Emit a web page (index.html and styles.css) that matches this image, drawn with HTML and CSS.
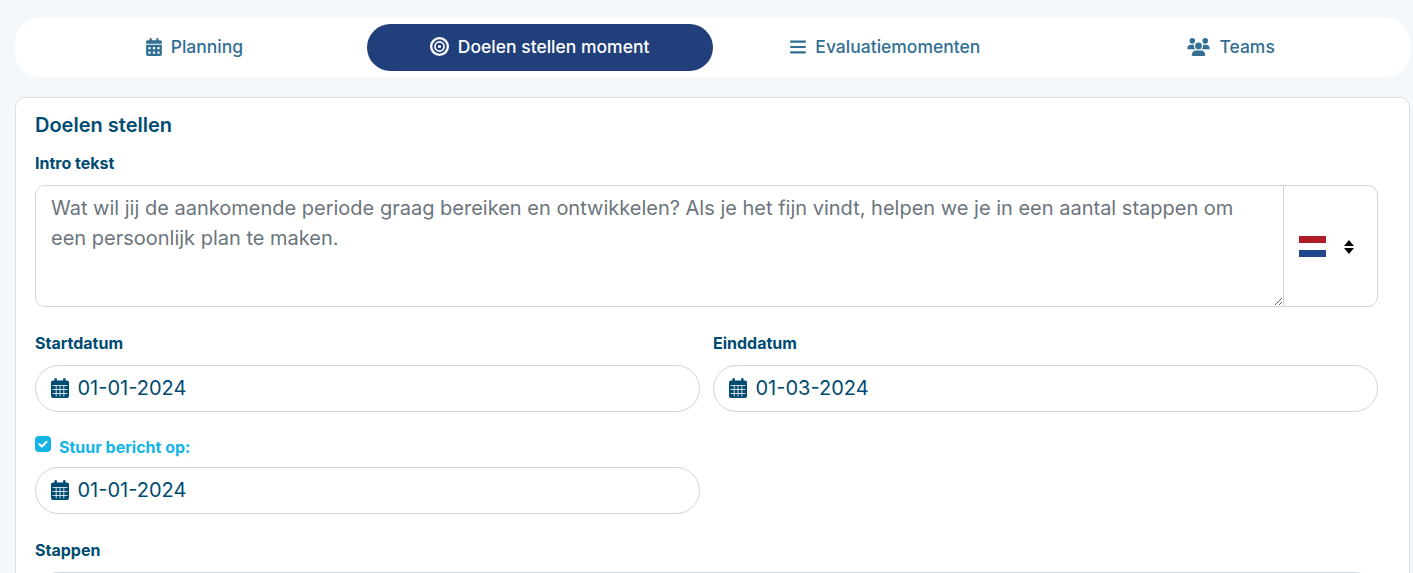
FILE: index.html
```html
<!DOCTYPE html>
<html lang="en">
  <head>
    <meta charset="UTF-8">
    <title>Doelen stellen</title>
    <link rel="stylesheet" href="styles.css">
  </head>
  <body>

    <svg class="icon-defs" width="0" height="0">
      <symbol id="calendar" viewBox="0 0 448 512">
        <path d="M128 0c17.7 0 32 14.3 32 32V64H288V32c0-17.7 14.3-32 32-32s32 14.3 32 32V64h48c26.500 0 48 21.500 48 48v48H0V112C0 85.500 21.500 64 48 64H96V32c0-17.700 14.300-32 32-32zM0 192H448V464c0 26.500-21.500 48-48 48H48c-26.500 0-48-21.500-48-48V192zm64 80v32c0 8.800 7.200 16 16 16h32c8.800 0 16-7.200 16-16V272c0-8.800-7.200-16-16-16H80c-8.800 0-16 7.200-16 16zm128 0v32c0 8.800 7.200 16 16 16h32c8.800 0 16-7.200 16-16V272c0-8.800-7.200-16-16-16H208c-8.800 0-16 7.200-16 16zm144-16c-8.800 0-16 7.200-16 16v32c0 8.800 7.200 16 16 16h32c8.800 0 16-7.200 16-16V272c0-8.800-7.200-16-16-16H336zM64 400v32c0 8.800 7.200 16 16 16h32c8.800 0 16-7.200 16-16V400c0-8.800-7.200-16-16-16H80c-8.800 0-16 7.200-16 16zm144-16c-8.800 0-16 7.200-16 16v32c0 8.800 7.200 16 16 16h32c8.800 0 16-7.200 16-16V400c0-8.800-7.200-16-16-16H208zm112 16v32c0 8.800 7.200 16 16 16h32c8.800 0 16-7.200 16-16V400c0-8.800-7.200-16-16-16H336c-8.800 0-16 7.200-16 16z"/>
      </symbol>
      <symbol id="calendar-grid" viewBox="0 0 18 20">
        <rect x="3.500" y="0" width="2.400" height="4" rx="1.200"/>
        <rect x="12.100" y="0" width="2.400" height="4" rx="1.200"/>
        <path d="M2 2.500h14a2 2 0 0 1 2 2V18a2 2 0 0 1-2 2H2a2 2 0 0 1-2-2V4.500a2 2 0 0 1 2-2z"/>
        <path d="M1.500 7.500h15M1.500 11.500h15M1.500 15.500h15M5.200 7.500v11M9 7.500v11M12.800 7.500v11" stroke="#fff" stroke-width="0.800" fill="none"/>
      </symbol>
    </svg>

    <nav class="tabs">
      <a class="tab">
        <svg class="tab-icon cal"><use href="#calendar"/></svg>
        Planning
      </a>
      <a class="tab active">
        <svg class="tab-icon target" viewBox="0 0 18 18">
          <circle cx="9" cy="9" r="7.900" fill="none" stroke="currentColor" stroke-width="2.200"/>
          <circle cx="9" cy="9" r="4.300" fill="none" stroke="currentColor" stroke-width="1.600"/>
          <circle cx="9" cy="9" r="1.500" fill="currentColor"/>
        </svg>
        Doelen stellen moment
      </a>
      <a class="tab">
        <svg class="tab-icon bars" viewBox="0 0 16 14" fill="currentColor">
          <rect x="0" y="0.500" width="16" height="2.200" rx="1"/>
          <rect x="0" y="5.900" width="16" height="2.200" rx="1"/>
          <rect x="0" y="11.300" width="16" height="2.200" rx="1"/>
        </svg>
        Evaluatiemomenten
      </a>
      <a class="tab">
        <svg class="tab-icon users" viewBox="0 0 640 512" fill="currentColor">
          <path d="M144 0a80 80 0 1 1 0 160A80 80 0 1 1 144 0zM512 0a80 80 0 1 1 0 160A80 80 0 1 1 512 0zM0 298.700C0 239.800 47.800 192 106.700 192h42.700c15.900 0 31 3.500 44.600 9.700-1.300 7.200-1.900 14.700-1.900 22.300 0 38.200 16.800 72.500 43.300 96H21.300C9.600 320 0 310.400 0 298.700zM405.300 320h-.7c26.600-23.500 43.300-57.800 43.300-96 0-7.600-.7-15-1.900-22.300 13.600-6.300 28.700-9.700 44.600-9.700h42.700C592.200 192 640 239.800 640 298.700c0 11.800-9.600 21.300-21.300 21.300H405.300zM224 224a96 96 0 1 1 192 0 96 96 0 1 1-192 0zM128 485.300C128 411.700 187.700 352 261.300 352h117.300C452.300 352 512 411.700 512 485.300c0 14.700-11.900 26.700-26.700 26.700H154.700c-14.700 0-26.700-11.900-26.700-26.700z"/>
        </svg>
        Teams
      </a>
    </nav>

    <section class="card">
      <h2>Doelen stellen</h2>

      <label class="field-label">Intro tekst</label>
      <div class="intro-box">
        <textarea class="intro-text">Wat wil jij de aankomende periode graag bereiken en ontwikkelen? Als je het fijn vindt, helpen we je in een aantal stappen om een persoonlijk plan te maken.</textarea>
        <div class="lang-select">
          <svg class="flag" viewBox="0 0 27 21">
            <rect width="27" height="7" fill="#ae1c28"/>
            <rect y="7" width="27" height="7" fill="#fff"/>
            <rect y="14" width="27" height="7" fill="#21468b"/>
          </svg>
          <svg class="updown" viewBox="0 0 10 14">
            <path d="M5 0l5 6H0zM5 14L0 8h10z"/>
          </svg>
        </div>
      </div>

      <div class="date-row">
        <div>
          <label class="field-label">Startdatum</label>
          <div class="date-input">
            <svg class="date-icon"><use href="#calendar-grid"/></svg>
            01-01-2024
          </div>
        </div>
        <div>
          <label class="field-label">Einddatum</label>
          <div class="date-input">
            <svg class="date-icon"><use href="#calendar-grid"/></svg>
            01-03-2024
          </div>
        </div>
      </div>

      <div class="date-row send-row">
        <div>
          <div class="check-line">
            <span class="checkbox">
              <svg viewBox="0 0 16 16"><path d="M4.500 8.200l2.400 2.300 4.600-4.800" fill="none" stroke="#fff" stroke-width="2" stroke-linecap="round" stroke-linejoin="round"/></svg>
            </span>
            <label class="field-label send-label">Stuur bericht op:</label>
          </div>
          <div class="date-input">
            <svg class="date-icon"><use href="#calendar-grid"/></svg>
            01-01-2024
          </div>
        </div>
      </div>

      <label class="field-label steps-label">Stappen</label>
      <div class="steps-box"></div>
    </section>

  </body>
</html>
```

FILE: styles.css
```css
* {
  box-sizing: border-box;
  margin: 0;
  padding: 0;
}

html, body {
  height: 573px;
  overflow: hidden;
}

body {
  background-color: #f5f8fb;
  font-family: Inter, "Noto Sans", sans-serif;
  color: #004b71;
  padding: 18px 3px 0 15px;
}

.icon-defs {
  display: block;
  height: 0;
}

.tabs {
  display: grid;
  grid-template-columns: repeat(4, 1fr);
  height: 59px;
  padding: 6px;
  background-color: white;
  border-radius: 24px;
}

.tab {
  display: flex;
  align-items: center;
  justify-content: center;
  gap: 9px;
  padding-bottom: 2px;
  font-size: 17.5px;
  font-weight: 500;
  color: #336f93;
  border-radius: 24px;
}

.tab.active {
  background-color: #213f7b;
  color: white;
}

.tab-icon {
  fill: currentColor;
}

.tab-icon.cal {
  width: 16px;
  height: 18px;
  margin-left: 1px;
}

.tab-icon.target {
  width: 19px;
  height: 19px;
}

.tab-icon.bars {
  width: 16px;
  height: 14px;
}

.tab-icon.users {
  width: 23px;
  height: 18px;
}

.card {
  margin-top: 20px;
  height: 520px;
  padding: 16px 31px 0 19px;
  background-color: white;
  border: 1px solid #d8dfe6;
  border-radius: 10px;
}

.card h2 {
  font-size: 20px;
  font-weight: 600;
  line-height: 23px;
}

.field-label {
  display: block;
  font-size: 16px;
  font-weight: 700;
  line-height: 18px;
}

.card h2 + .field-label {
  margin-top: 17px;
}

.intro-box {
  display: flex;
  height: 122px;
  margin-top: 13px;
  border: 1px solid #cbd5df;
  border-radius: 10px;
  overflow: hidden;
}

.intro-text {
  flex: 1;
  padding: 7px 15px;
  border: none;
  outline: none;
  resize: vertical;
  font-family: inherit;
  font-size: 20px;
  line-height: 30px;
  color: #6c757d;
}

.lang-select {
  display: flex;
  align-items: center;
  gap: 18px;
  width: 94px;
  padding-left: 15px;
  border-left: 1px solid #cbd5df;
}

.flag {
  width: 27px;
  height: 21px;
}

.updown {
  width: 10px;
  height: 14px;
  margin-top: 1px;
}

.date-row {
  display: grid;
  grid-template-columns: 1fr 1fr;
  column-gap: 13px;
  margin-top: 27px;
}

.date-row .field-label {
  margin-bottom: 13px;
}

.date-input {
  display: flex;
  align-items: center;
  gap: 8.5px;
  height: 47px;
  padding: 0 0 1px 15px;
  border: 1px solid #cbd5df;
  border-radius: 24px;
  font-size: 20px;
}

.date-icon {
  width: 18px;
  height: 20px;
  fill: currentColor;
}

.send-row {
  margin-top: 24px;
}

.check-line {
  display: flex;
  align-items: flex-start;
  gap: 8px;
  height: 31px;
}

.checkbox {
  width: 16px;
  height: 16px;
  background-color: #12b5e5;
  border-radius: 4px;
}

.checkbox svg {
  display: block;
}

.date-row .send-label {
  margin: 2px 0 0;
  color: #12b5e5;
}

.steps-label {
  margin-top: 27px;
}

.steps-box {
  height: 47px;
  margin-top: 13px;
  border: 1px solid #cbd5df;
  border-radius: 24px;
}
```
